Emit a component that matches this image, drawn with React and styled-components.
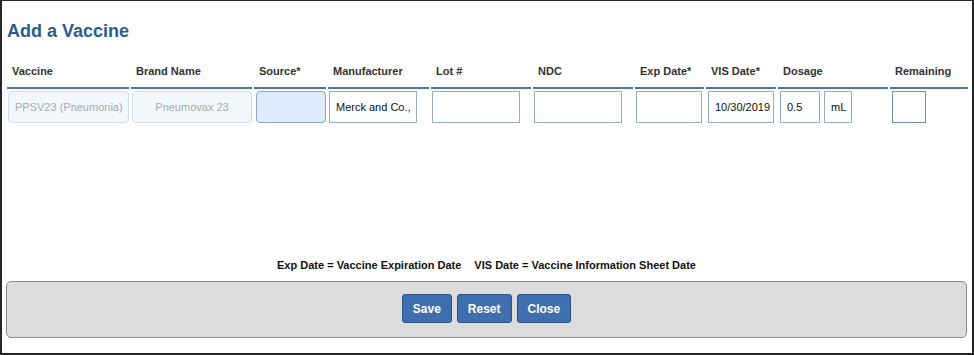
import React from "react";
import styled, { createGlobalStyle } from "styled-components";

const Global = createGlobalStyle`
  html, body { margin: 0; padding: 0; background: #fff; }
  body { font-family: "Liberation Sans", Arial, Helvetica, sans-serif; }
  * { box-sizing: border-box; }
`;

const Frame = styled.div`
  width: 974px;
  height: 355px;
  border: 2px solid #262626;
  border-top-width: 1px;
  padding: 0 5px 15px 4px;
  display: flex;
  flex-direction: column;
  background: #fff;
`;

const Title = styled.h2`
  margin: 19px 0 0 1px;
  font-size: 18px;
  line-height: 22px;
  font-weight: bold;
  color: #2a5d8f;
`;

const Grid = styled.div`
  margin: 23px 0 0 1px;
  display: grid;
  grid-template-columns: 122px 121px 72px 101px 100px 100px 69px 70px 110px 78px;
  column-gap: 2px;
  row-gap: 2px;
`;

const Th = styled.div`
  font-size: 11px;
  line-height: 13px;
  font-weight: bold;
  color: #333;
  padding: 0 5px 9px;
  border-bottom: 2px solid #4a77a3;
  white-space: nowrap;
`;

const Td = styled.div`
  display: flex;
  gap: 4px;
  padding-left: ${(p) => p.$inset ?? 1}px;
`;

const Field = styled.div`
  height: 32px;
  width: ${(p) => (p.$w ? `${p.$w}px` : "100%")};
  font-size: 11px;
  display: flex;
  align-items: center;
  justify-content: ${(p) => (p.$center ? "center" : "flex-start")};
  padding: 0 6px;
  white-space: nowrap;
  overflow: hidden;
  color: ${(p) => (p.$disabled ? "#ababab" : "#111")};
  background: ${(p) =>
    p.$disabled ? "#f2f7fc" : p.$focus ? "#ddebfa" : "#fff"};
  border: 1px solid
    ${(p) =>
      p.$disabled
        ? "#cfdce9"
        : p.$focus
        ? "#8ea8c4"
        : p.$dark
        ? "#7290b2"
        : "#94afcd"};
  border-radius: ${(p) => (p.$round ? "4px" : "0")};
`;

const Spacer = styled.div`
  flex: 1;
`;

const Note = styled.div`
  text-align: center;
  font-size: 11px;
  line-height: 13px;
  font-weight: bold;
  color: #111;
  margin-bottom: 9px;
  span + span { margin-left: 13px; }
`;

const Bar = styled.div`
  height: 57px;
  background: #dcdcdc;
  border: 1px solid #8c8c8c;
  border-radius: 5px;
  display: flex;
  justify-content: center;
  align-items: flex-start;
  gap: 5px;
  padding-top: 12px;
`;

const Button = styled.button`
  height: 29px;
  padding: 0 10px;
  background: #3f6fae;
  border: 1px solid #2b5585;
  border-radius: 3px;
  color: #fff;
  font-family: "Liberation Sans", Arial, Helvetica, sans-serif;
  font-size: 12px;
  font-weight: bold;
  cursor: pointer;
`;

const headers = [
  "Vaccine",
  "Brand Name",
  "Source*",
  "Manufacturer",
  "Lot #",
  "NDC",
  "Exp Date*",
  "VIS Date*",
  "Dosage",
  "Remaining",
];

export default function App() {
  return (
    <>
      <Global />
      <Frame>
        <Title>Add a Vaccine</Title>
        <Grid>
          {headers.map((h) => (
            <Th key={h}>{h}</Th>
          ))}
          <Td>
            <Field $disabled $round>PPSV23 (Pneumonia)</Field>
          </Td>
          <Td>
            <Field $disabled $round $center>Pneumovax 23</Field>
          </Td>
          <Td $inset={2}>
            <Field $focus $round $w={70} />
          </Td>
          <Td>
            <Field $w={88}>Merck and Co.,</Field>
          </Td>
          <Td>
            <Field $w={88} />
          </Td>
          <Td>
            <Field $w={88} />
          </Td>
          <Td>
            <Field $w={66} />
          </Td>
          <Td $inset={2}>
            <Field $w={66}>10/30/2019</Field>
          </Td>
          <Td $inset={2}>
            <Field $w={40}>0.5</Field>
            <Field $w={28}>mL</Field>
          </Td>
          <Td $inset={2}>
            <Field $w={34} $dark />
          </Td>
        </Grid>
        <Spacer />
        <Note>
          <span>Exp Date = Vaccine Expiration Date</span>
          <span>VIS Date = Vaccine Information Sheet Date</span>
        </Note>
        <Bar>
          <Button>Save</Button>
          <Button>Reset</Button>
          <Button>Close</Button>
        </Bar>
      </Frame>
    </>
  );
}
